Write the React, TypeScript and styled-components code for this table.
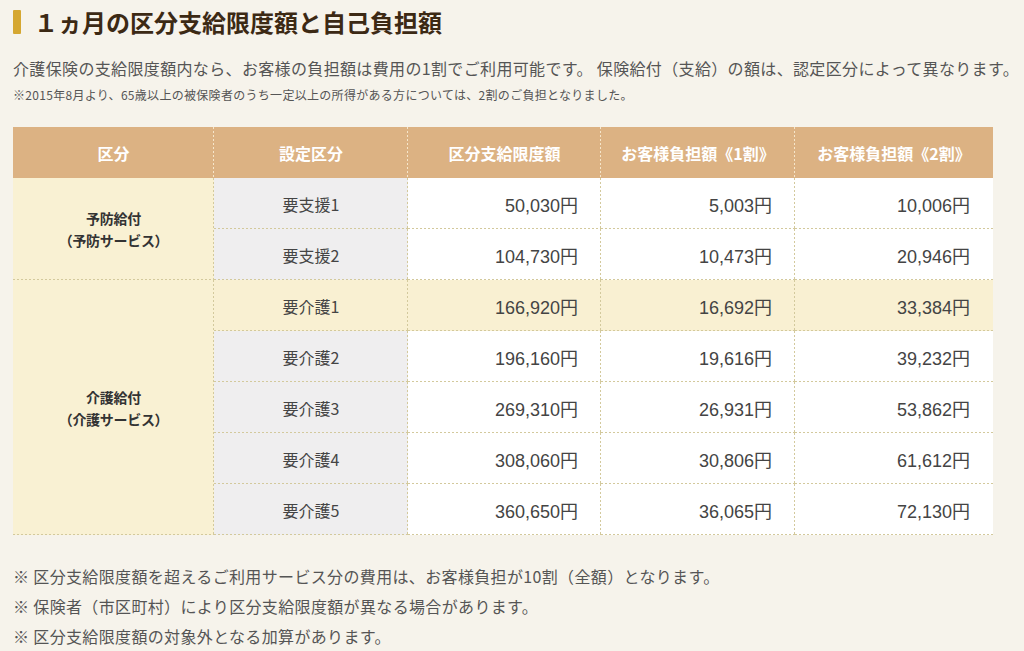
import React from "react";
import styled, { createGlobalStyle, css } from "styled-components";

type Level = {
  label: string;
  limit: string;
  one: string;
  two: string;
  highlight?: boolean;
};

type Group = {
  title: string;
  sub: string;
  levels: Level[];
};

const groups: Group[] = [
  {
    title: "予防給付",
    sub: "（予防サービス）",
    levels: [
      { label: "要支援1", limit: "50,030円", one: "5,003円", two: "10,006円" },
      { label: "要支援2", limit: "104,730円", one: "10,473円", two: "20,946円" },
    ],
  },
  {
    title: "介護給付",
    sub: "（介護サービス）",
    levels: [
      { label: "要介護1", limit: "166,920円", one: "16,692円", two: "33,384円", highlight: true },
      { label: "要介護2", limit: "196,160円", one: "19,616円", two: "39,232円" },
      { label: "要介護3", limit: "269,310円", one: "26,931円", two: "53,862円" },
      { label: "要介護4", limit: "308,060円", one: "30,806円", two: "61,612円" },
      { label: "要介護5", limit: "360,650円", one: "36,065円", two: "72,130円" },
    ],
  },
];

const headers = ["区分", "設定区分", "区分支給限度額", "お客様負担額《1割》", "お客様負担額《2割》"];
const colWidths = [201, 194, 193, 194, 198];

const notes = [
  "※ 区分支給限度額を超えるご利用サービス分の費用は、お客様負担が10割（全額）となります。",
  "※ 保険者（市区町村）により区分支給限度額が異なる場合があります。",
  "※ 区分支給限度額の対象外となる加算があります。",
];

export default function App() {
  return (
    <>
      <GlobalStyle />
      <Page>
        <Heading>１ヵ月の区分支給限度額と自己負担額</Heading>
        <Lead>
          介護保険の支給限度額内なら、お客様の負担額は費用の1割でご利用可能です。 保険給付（支給）の額は、認定区分によって異なります。
        </Lead>
        <Note>※2015年8月より、65歳以上の被保険者のうち一定以上の所得がある方については、2割のご負担となりました。</Note>

        <FeeTable>
          <colgroup>
            {colWidths.map((w, i) => (
              <col key={i} style={{ width: w }} />
            ))}
          </colgroup>
          <thead>
            <tr>
              {headers.map((h, i) => (
                <HeadCell key={h} $last={i === headers.length - 1}>
                  {h}
                </HeadCell>
              ))}
            </tr>
          </thead>
          <tbody>
            {groups.map((g) =>
              g.levels.map((lv, i) => (
                <tr key={lv.label}>
                  {i === 0 && (
                    <GroupCell rowSpan={g.levels.length}>
                      {g.title}
                      <br />
                      {g.sub}
                    </GroupCell>
                  )}
                  <LevelCell $highlight={lv.highlight}>{lv.label}</LevelCell>
                  <AmountCell $highlight={lv.highlight}>{lv.limit}</AmountCell>
                  <AmountCell $highlight={lv.highlight}>{lv.one}</AmountCell>
                  <AmountCell $highlight={lv.highlight} $last>
                    {lv.two}
                  </AmountCell>
                </tr>
              ))
            )}
          </tbody>
        </FeeTable>

        <Notes>
          {notes.map((n) => (
            <li key={n}>{n}</li>
          ))}
        </Notes>
      </Page>
    </>
  );
}

const GlobalStyle = createGlobalStyle`
  html, body {
    margin: 0;
    padding: 0;
    background: #f6f3eb;
  }
  body {
    font-family: "Noto Sans CJK JP", "Noto Sans", sans-serif;
    color: #555;
  }
`;

// dotted right/bottom rules, drawn as 2px dots on a 4px pitch
const dotted = (color: string, right: boolean, bottom: boolean) => css`
  background-image: ${[
    bottom && `linear-gradient(to right, ${color} 50%, transparent 50%)`,
    right && `linear-gradient(to bottom, ${color} 50%, transparent 50%)`,
  ]
    .filter(Boolean)
    .join(", ")};
  background-size: ${[bottom && "4px 1px", right && "1px 4px"].filter(Boolean).join(", ")};
  background-repeat: ${[bottom && "repeat-x", right && "repeat-y"].filter(Boolean).join(", ")};
  background-position: ${[bottom && "left bottom", right && "right top"].filter(Boolean).join(", ")};
`;

const Page = styled.div`
  width: 1024px;
  height: 651px;
  overflow: hidden;
  padding: 10px 13px 0;
  box-sizing: border-box;
`;

const Heading = styled.h2`
  display: flex;
  align-items: center;
  gap: 13px;
  margin: 0;
  height: 24px;
  font-size: 24px;
  line-height: 24px;
  font-weight: 700;
  color: #3c2914;

  &::before {
    content: "";
    width: 8px;
    height: 24px;
    background: #d5a731;
    border-radius: 1px;
  }
`;

const Lead = styled.p`
  margin: 22px 0 0;
  font-size: 16px;
  line-height: 24px;
  letter-spacing: 0.35px;
  white-space: nowrap;
  color: #555;
`;

const Note = styled.p`
  margin: 6px 0 0;
  font-size: 12px;
  line-height: 18px;
  letter-spacing: 0.3px;
  color: #555;
`;

const FeeTable = styled.table`
  margin-top: 23px;
  width: 980px;
  table-layout: fixed;
  border-collapse: collapse;
  border-spacing: 0;
`;

const HeadCell = styled.th<{ $last?: boolean }>`
  height: 51px;
  padding: 0;
  background-color: #dcb283;
  ${({ $last }) => dotted("#f6e6cb", !$last, false)}
  color: #fff;
  font-size: 16px;
  font-weight: 700;
  text-align: center;
  vertical-align: middle;
`;

const GroupCell = styled.td`
  padding: 0;
  background-color: #f9f1d3;
  ${dotted("#d3c99c", true, true)}
  color: #333;
  font-size: 14px;
  font-weight: 700;
  letter-spacing: -0.3px;
  line-height: 22px;
  text-align: center;
  vertical-align: middle;
`;

const LevelCell = styled.td<{ $highlight?: boolean }>`
  height: 51px;
  padding: 0;
  background-color: ${({ $highlight }) => ($highlight ? "#f9f0d2" : "#efeeef")};
  ${dotted("#d3c99c", true, true)}
  color: #444;
  font-size: 16px;
  text-align: center;
  vertical-align: middle;
`;

const AmountCell = styled.td<{ $highlight?: boolean; $last?: boolean }>`
  height: 51px;
  padding: 0 23px 0 0;
  background-color: ${({ $highlight }) => ($highlight ? "#f9f0d2" : "#fff")};
  ${({ $last }) => dotted("#d3c99c", !$last, true)}
  font-family: "Liberation Sans", "Noto Sans CJK JP", sans-serif;
  color: #444;
  font-size: 18px;
  text-align: right;
  vertical-align: middle;
`;

const Notes = styled.ul`
  margin: 26px 0 0;
  padding: 0;
  list-style: none;
  font-size: 16px;
  line-height: 30px;
  letter-spacing: 0.35px;
  color: #555;
`;
